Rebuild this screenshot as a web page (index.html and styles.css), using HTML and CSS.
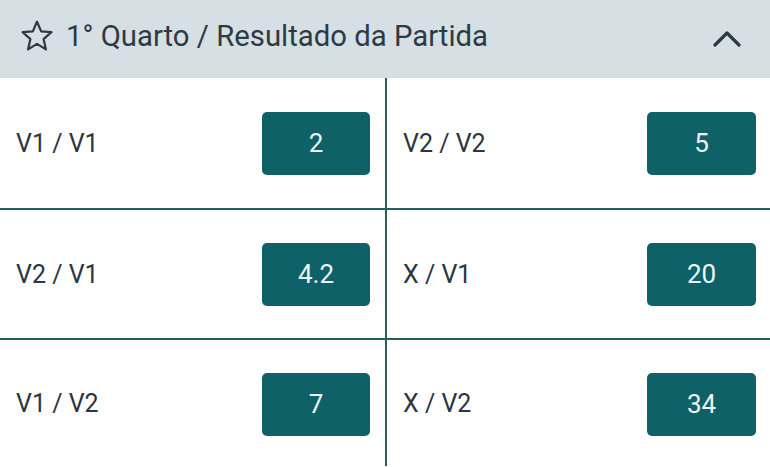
FILE: index.html
```html
<!DOCTYPE html>
<html lang="pt">
<head>
<meta charset="utf-8">
<link rel="stylesheet" href="styles.css">
</head>
<body>
<div class="market">
  <div class="market-head">
    <svg class="star" viewBox="0 0 32 32" width="34" height="34">
      <path d="M16 2.5 L19.9 11.6 L29.6 12.4 L22.2 18.9 L24.4 28.6 L16 23.4 L7.6 28.6 L9.8 18.9 L2.4 12.4 L12.1 11.6 Z" fill="none" stroke="#2c3a45" stroke-width="2.1" stroke-linejoin="round"/>
    </svg>
    <span class="title">1° Quarto / Resultado da Partida</span>
    <svg class="chevron" viewBox="0 0 28 18" width="28" height="18">
      <path d="M2 15 L14 3 L26 15" fill="none" stroke="#2c3a45" stroke-width="3.2" stroke-linecap="round" stroke-linejoin="round"/>
    </svg>
  </div>
  <div class="grid">
    <div class="row first">
      <div class="cell left"><span class="label">V1 / V1</span><span class="odd">2</span></div>
      <div class="cell right"><span class="label">V2 / V2</span><span class="odd">5</span></div>
    </div>
    <div class="row">
      <div class="cell left"><span class="label">V2 / V1</span><span class="odd">4.2</span></div>
      <div class="cell right"><span class="label">X / V1</span><span class="odd">20</span></div>
    </div>
    <div class="row">
      <div class="cell left"><span class="label">V1 / V2</span><span class="odd">7</span></div>
      <div class="cell right"><span class="label">X / V2</span><span class="odd">34</span></div>
    </div>
  </div>
</div>
</body>
</html>
```
FILE: styles.css
```css
* { box-sizing: border-box; }
html, body { margin: 0; padding: 0; background: #ffffff; }
body {
  font-family: Roboto, "Liberation Sans", sans-serif;
  color: #2b3641;
  width: 770px;
  height: 467px;
  overflow: hidden;
}
.market-head {
  height: 78px;
  background: #d6dfe3;
  display: flex;
  align-items: center;
  padding: 0 29px 6px 20px;
}
.star { flex: none; }
.title {
  font-size: 29.3px;
  line-height: 34px;
  margin-left: 12px;
  color: #2c3a45;
  flex: 1;
}
.chevron { flex: none; margin-top: 6px; }
.grid { height: 389px; overflow: hidden; }
.row {
  display: flex;
  height: 130px;
  border-top: 2px solid #245f5c;
}
.row.first { border-top: none; }
.row:last-child { height: 128px; }
.cell {
  display: flex;
  align-items: center;
  justify-content: space-between;
  padding-left: 16px;
}
.cell.left {
  width: 387px;
  border-right: 2px solid #245f5c;
  padding-right: 15px;
}
.cell.right {
  flex: 1;
  padding-right: 14px;
}
.label {
  font-size: 25px;
  color: #2b3641;
}
.odd {
  width: 108px;
  height: 63px;
  border-radius: 5px;
  background: #0e6167;
  color: #eef5f5;
  font-size: 26px;
  display: flex;
  align-items: center;
  justify-content: center;
}
.row:last-child .odd { margin-top: 2px; }
.right .odd { width: 109px; }
```
